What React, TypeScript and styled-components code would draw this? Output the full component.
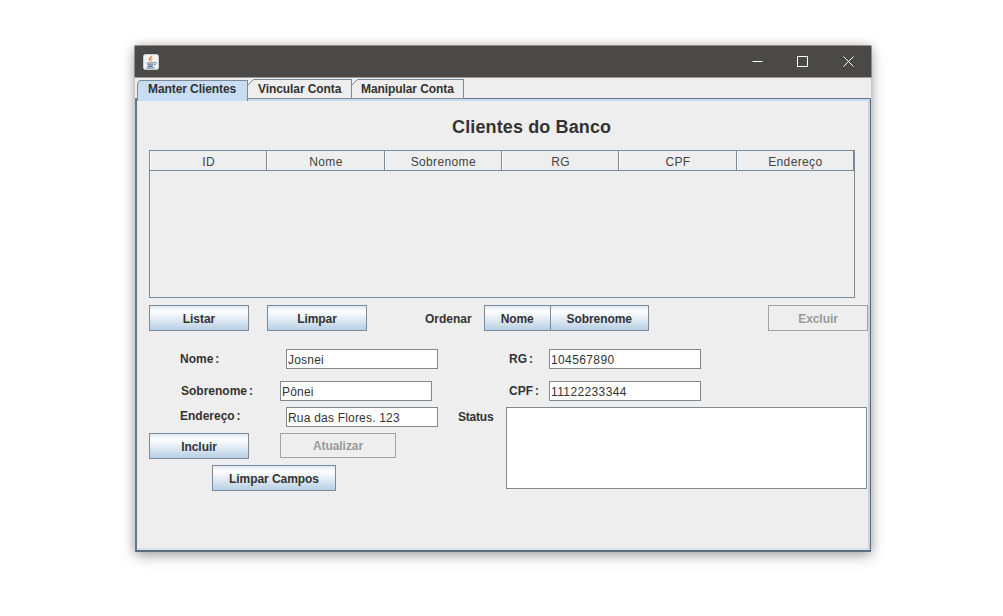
import styled, { createGlobalStyle } from 'styled-components'

const GlobalStyle = createGlobalStyle`
    * { box-sizing: border-box; }
    html, body { margin: 0; padding: 0; background: #fff; }
    body { font-family: "Liberation Sans", Arial, sans-serif; color: #333; }
`;

const Page = styled.div`
    width: 1003px;
    height: 616px;
    padding: 46px 0 0 135px;
    overflow: hidden;
`;

const Window = styled.div`
    width: 736px;
    height: 506px;
    display: flex;
    flex-direction: column;
    background: #eeeeee;
    box-shadow: 0 4px 14px rgba(0, 0, 0, 0.28), 0 0 9px rgba(0, 0, 0, 0.2);
`;

const TitleBar = styled.div`
    height: 31px;
    flex: none;
    display: flex;
    align-items: center;
    padding-left: 8px;
    background: #4b4947;
    box-shadow: 0 0 0 0.5px #4b4947;
`;

const WindowControls = styled.div`
    display: flex;
    margin-left: auto;
`;

const ControlButton = styled.div`
    width: 45.5px;
    height: 31px;
    display: flex;
    align-items: center;
    justify-content: center;
`;

const TabStrip = styled.div`
    height: 22px;
    flex: none;
    display: flex;
    align-items: flex-end;
    padding-left: 2px;
    position: relative;
    z-index: 1;
    margin-bottom: -1px;
`;

const ActiveTab = styled.div`
    width: 111px;
    height: 21px;
    margin-bottom: -2px;
    padding-left: 10px;
    border: 1px solid #7a8a99;
    border-bottom: none;
    border-top-left-radius: 4px 5px;
    background: #c8ddf2;
    font-size: 12px;
    font-weight: bold;
    letter-spacing: -0.08px;
    line-height: 17px;
    white-space: nowrap;
`;

const Tab = styled.div<{ $width: number; $pad: number }>`
    position: relative;
    width: ${p => p.$width}px;
    height: 20px;
    padding-left: ${p => p.$pad}px;
    padding-top: 2px;
    border-right: 1px solid #7a8a99;
    border-bottom: 1px solid #7a8a99;
    background: #eeeeee;
    font-size: 12px;
    font-weight: bold;
    letter-spacing: -0.08px;
    line-height: 17px;
    white-space: nowrap;

    /* top edge, starts after the cut corner */
    &::before {
        content: '';
        position: absolute;
        top: 0;
        left: 5px;
        right: 0;
        height: 1px;
        background: #7a8a99;
    }

    /* cut corner */
    &::after {
        content: '';
        position: absolute;
        top: 0;
        left: 0;
        width: 6px;
        height: 6px;
        background: linear-gradient(to bottom right, transparent calc(50% - 0.7px), #7a8a99 50%, transparent calc(50% + 0.7px));
    }
`;

const Panel = styled.div`
    flex: 1;
    border-style: solid;
    border-color: #64788f #5f6b78 #5f6b78 #64788f;
    border-width: 1px 1px 2px 2px;
`;

const PanelInner = styled.div`
    height: 100%;
    border-style: solid;
    border-width: 2px 2px 2px 1px;
    border-color: #c8daef #c5d3e6 #d5e2f2 #dfe8f4;
`;

const Heading = styled.h1`
    margin: 0;
    height: 49px;
    padding-left: 314px;
    font-size: 18px;
    line-height: 52px;
    font-weight: bold;
    letter-spacing: 0.13px;
    color: #333;
`;

const ClientTable = styled.div`
    width: 706px;
    height: 148px;
    margin-left: 11px;
    border: 1px solid #7a8a99;
`;

const HeaderRow = styled.div`
    display: grid;
    grid-template-columns: repeat(6, 1fr);
    grid-template-rows: 19px;
    height: 20px;
    border-bottom: 1px solid #7a8a99;
`;

const HeaderCell = styled.div`
    padding-top: 1px;
    text-align: center;
    font-size: 12px;
    line-height: 20px;
    letter-spacing: 0.35px;
    color: #444;
    border-right: 1px solid #7a8a99;
    border-left: 1px solid #fbfbfb;
`;

const ButtonRow = styled.div`
    display: flex;
    align-items: center;
    height: 26px;
    margin-top: 7px;
    padding-left: 11px;
`;

const Button = styled.button<{ $width: number; $height?: number }>`
    display: block;
    flex: none;
    width: ${p => p.$width}px;
    height: ${p => p.$height ?? 26}px;
    padding: 1px 0 0 0;
    border: 1px solid #7a8a99;
    background: linear-gradient(#dde8f3 0, #ffffff 22%, #b8cfe5 100%);
    font-family: inherit;
    font-size: 12px;
    font-weight: bold;
    letter-spacing: -0.06px;
    color: #333;
    &:disabled {
        border-color: #a3a3a3;
        background: #eeeeee;
        color: #999;
    }
`;

const ListarGap = styled.div`
    width: 18px;
    flex: none;
`;

const OrderLabel = styled.span`
    margin: 0 12px 0 58px;
    padding-top: 2px;
    font-size: 12px;
    font-weight: bold;
`;

const ButtonGroup = styled.div`
    display: flex;
    & > button + button { margin-left: -1px; }
`;

const DeleteSlot = styled.div`
    margin-left: auto;
`;

const Form = styled.div`
    margin-top: 18px;
`;

const FieldRow = styled.div<{ $gap: number }>`
    display: flex;
    align-items: center;
    height: 20px;
    margin-bottom: ${p => p.$gap}px;
    padding-left: 42px;
`;

const FieldLabel = styled.label<{ $width: number; $before?: number; $raise?: number }>`
    flex: none;
    width: ${p => p.$width}px;
    margin-left: ${p => p.$before ?? 0}px;
    padding-bottom: ${p => p.$raise ?? 0}px;
    font-size: 12px;
    font-weight: bold;
    word-spacing: -1.4px;
    color: #333;
    white-space: nowrap;
`;

const TextField = styled.input<{ $numeric?: boolean }>`
    flex: none;
    width: 152px;
    height: 20px;
    padding: 2px 1px 0 1px;
    border: 1px solid #808890;
    border-radius: 0;
    outline: none;
    background: #fff;
    font-family: inherit;
    font-size: 12px;
    letter-spacing: ${p => (p.$numeric ? 0.38 : 0.2)}px;
    color: #333;
`;

const LowerGrid = styled.div`
    display: grid;
    grid-template-columns: 320px 48px 361px;
    align-items: start;
`;

const LeftColumn = styled.div`
    display: flex;
    flex-direction: column;
`;

const ActionRow = styled.div`
    display: flex;
    align-items: flex-start;
    padding-left: 11px;
    & > button + button { margin-left: 31px; }
`;

const ClearRow = styled.div`
    margin-top: 6px;
    padding-left: 74px;
`;

const StatusLabel = styled.label`
    font-size: 12px;
    font-weight: bold;
    letter-spacing: -0.2px;
    line-height: 20px;
`;

const StatusBox = styled.div`
    height: 82px;
    border: 1px solid #808890;
    background: #fff;
`;

const JavaIcon = () => (
    <svg width="16" height="16" viewBox="0 0 16 16">
        <rect x="0.5" y="0.5" width="15" height="15" rx="2" fill="#f3f5f7" stroke="#c9ced4" />
        <path d="M9 1.8c1 1.8-2.6 2.9-1.8 4.8.2.6.6 1 1 1.4-1.7-.7-2.8-1.8-2.3-3.2C6.300 3.700 8.200 3.100 9 1.800z" fill="#e8701a" />
        <path d="M10.800 4.200c-1.100.6-2.100 1.100-1.800 2.300l.3 1.100c-1-.6-1.400-1.500-.9-2.300.4-.7 1.500-.8 2.400-1.100z" fill="#e8701a" />
        <path d="M3.800 9h7M4.200 10.800h6M4.800 12.400h5M3.200 14h8.600" stroke="#4f7396" strokeWidth="1.100" fill="none" />
        <path d="M11 8.500c2.800-.6 3 2-.2 2.700" stroke="#4f7396" strokeWidth="1" fill="none" />
    </svg>
);

const columns = ['ID', 'Nome', 'Sobrenome', 'RG', 'CPF', 'Endereço'];

export default function App() {
    return (
        <Page>
            <GlobalStyle />
            <Window>
                <TitleBar>
                    <JavaIcon />
                    <WindowControls>
                        <ControlButton>
                            <svg width="11" height="11" viewBox="0 0 11 11"><path d="M0.5 5.500h10" stroke="#fff" fill="none" /></svg>
                        </ControlButton>
                        <ControlButton>
                            <svg width="11" height="11" viewBox="0 0 11 11"><rect x="0.5" y="0.5" width="10" height="10" stroke="#fff" fill="none" /></svg>
                        </ControlButton>
                        <ControlButton>
                            <svg width="11" height="11" viewBox="0 0 11 11"><path d="M0.5 0.5l10 10M10.500 0.5l-10 10" stroke="#fff" fill="none" /></svg>
                        </ControlButton>
                    </WindowControls>
                </TitleBar>
                <TabStrip>
                    <ActiveTab>Manter Clientes</ActiveTab>
                    <Tab $width={104} $pad={10}>Vincular Conta</Tab>
                    <Tab $width={112} $pad={9}>Manipular Conta</Tab>
                </TabStrip>
                <Panel>
                    <PanelInner>
                        <Heading>Clientes do Banco</Heading>
                        <ClientTable>
                            <HeaderRow>
                                {columns.map(c => <HeaderCell key={c}>{c}</HeaderCell>)}
                            </HeaderRow>
                        </ClientTable>
                        <ButtonRow>
                            <Button $width={100}>Listar</Button>
                            <ListarGap />
                            <Button $width={100}>Limpar</Button>
                            <OrderLabel>Ordenar</OrderLabel>
                            <ButtonGroup>
                                <Button $width={67}>Nome</Button>
                                <Button $width={99}>Sobrenome</Button>
                            </ButtonGroup>
                            <DeleteSlot>
                                <Button $width={100} disabled>Excluir</Button>
                            </DeleteSlot>
                        </ButtonRow>
                        <Form>
                            <FieldRow $gap={12}>
                                <FieldLabel $width={106}>Nome :</FieldLabel>
                                <TextField readOnly value="Josnei" />
                                <FieldLabel $width={40} $before={71}>RG :</FieldLabel>
                                <TextField $numeric readOnly value="104567890" />
                            </FieldRow>
                            <FieldRow $gap={6}>
                                <FieldLabel $width={99} $before={1}>Sobrenome :</FieldLabel>
                                <TextField readOnly value="Pônei" />
                                <FieldLabel $width={40} $before={77}>CPF :</FieldLabel>
                                <TextField $numeric readOnly value="11122233344" />
                            </FieldRow>
                            <LowerGrid>
                                <LeftColumn>
                                    <FieldRow $gap={6}>
                                        <FieldLabel $width={106} $raise={3}>Endereço :</FieldLabel>
                                        <TextField readOnly value="Rua das Flores. 123" />
                                    </FieldRow>
                                    <ActionRow>
                                        <Button $width={100}>Incluir</Button>
                                        <Button $width={116} $height={25} disabled>Atualizar</Button>
                                    </ActionRow>
                                    <ClearRow>
                                        <Button $width={124}>Limpar Campos</Button>
                                    </ClearRow>
                                </LeftColumn>
                                <StatusLabel>Status</StatusLabel>
                                <StatusBox />
                            </LowerGrid>
                        </Form>
                    </PanelInner>
                </Panel>
            </Window>
        </Page>
    )
}
